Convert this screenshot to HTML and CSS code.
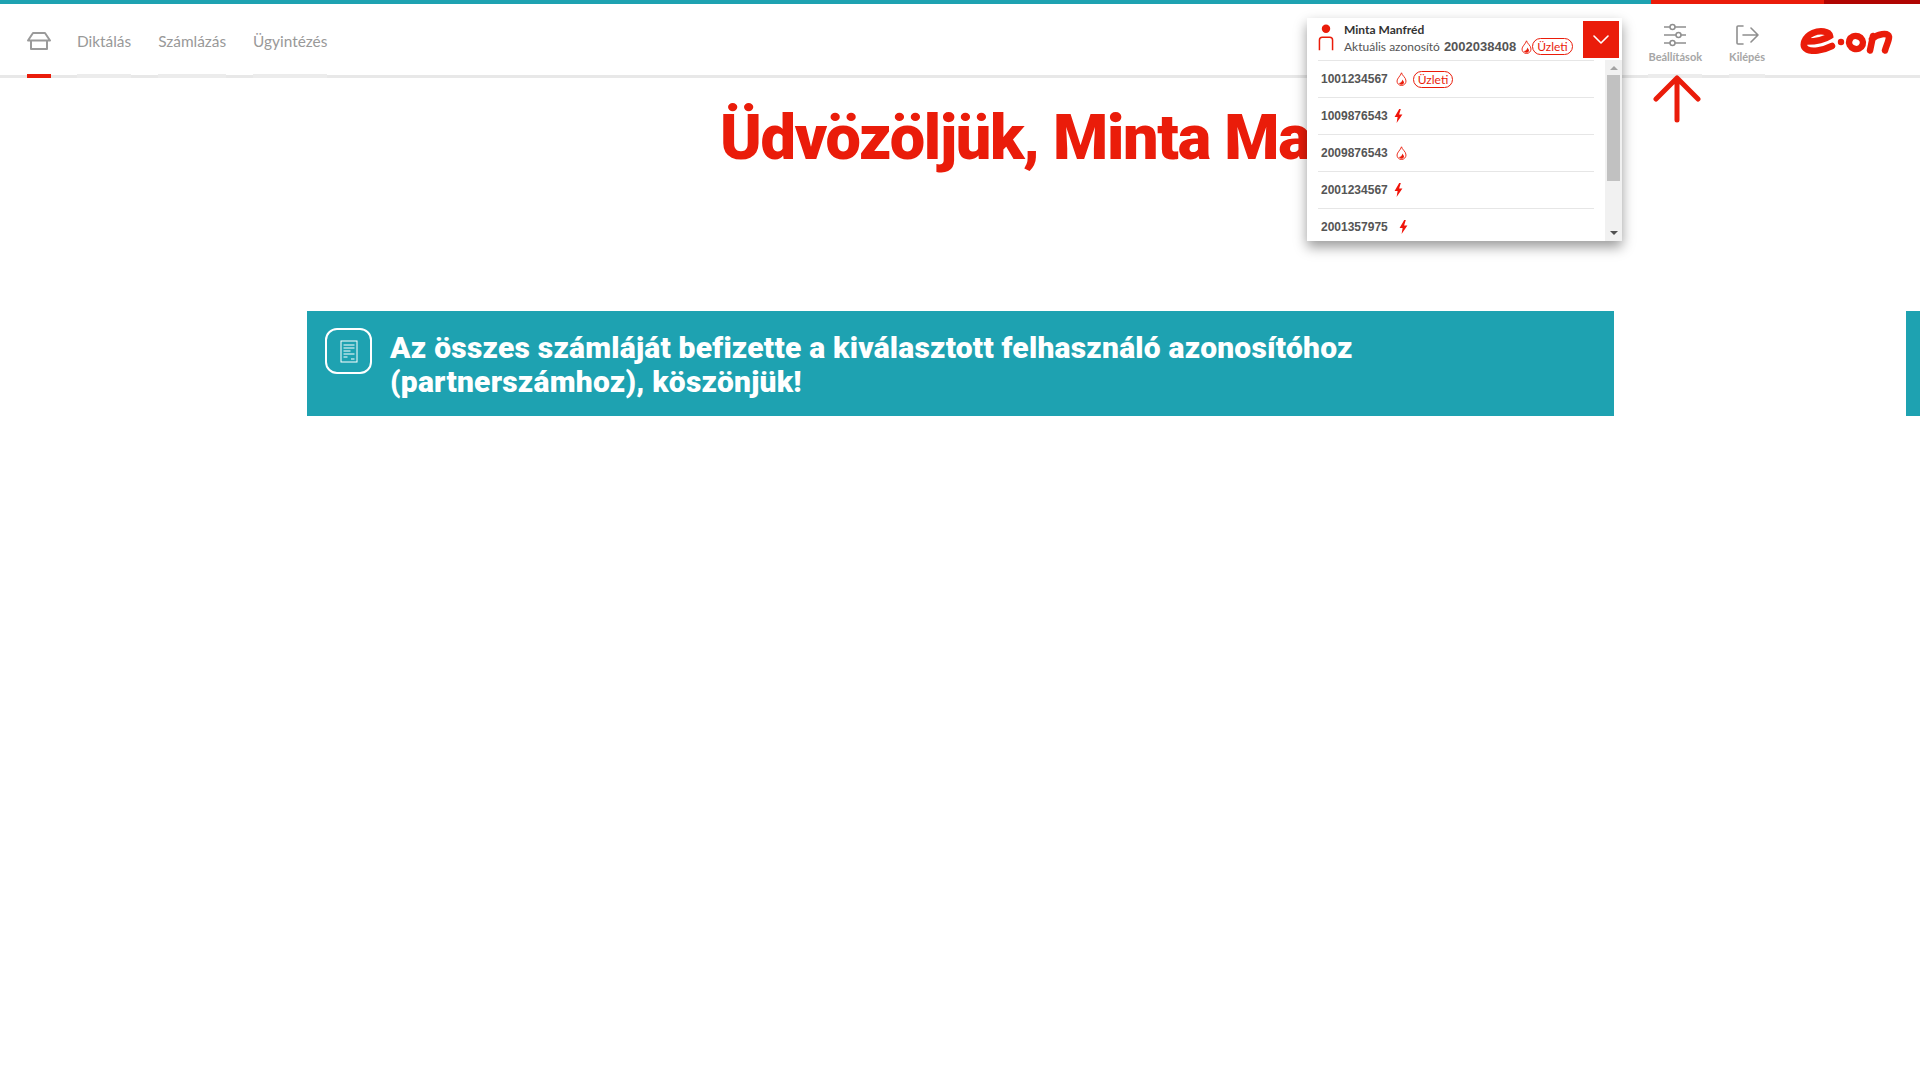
FILE: index.html
```html
<!DOCTYPE html>
<html lang="hu">
<head>
  <meta charset="utf-8">
  <title>E.ON Ügyfélszolgálat</title>
  <link rel="stylesheet" href="styles.css">
</head>
<body>
  <div class="stripe">
    <span class="stripe-teal"></span>
    <span class="stripe-red"></span>
    <span class="stripe-dark"></span>
  </div>

  <header class="header">
    <nav class="nav">
      <a class="nav-item home active">
        <svg width="24" height="18" viewBox="0 0 24 18" fill="none" stroke="#9a9a9a" stroke-width="2" stroke-linejoin="round">
          <path d="M6 1h12l5 7.5H1z"/>
          <path d="M4 8.5V17h16V8.5"/>
        </svg>
      </a>
      <a class="nav-item">Diktálás</a>
      <a class="nav-item">Számlázás</a>
      <a class="nav-item">Ügyintézés</a>
    </nav>

    <div class="actions">
      <a class="action">
        <svg width="24" height="24" viewBox="0 0 24 24" fill="none" stroke="#8f8f8f" stroke-width="1.5">
          <path d="M1 4h6M12 4h11M1 12h12M18 12h5M1 20h6M12 20h11"/>
          <circle cx="9.5" cy="4" r="2.5"/>
          <circle cx="15.5" cy="12" r="2.5"/>
          <circle cx="9.5" cy="20" r="2.5"/>
        </svg>
        <span>Beállítások</span>
      </a>
      <a class="action">
        <svg width="24" height="24" viewBox="0 0 24 24" fill="none" stroke="#8f8f8f" stroke-width="1.6" stroke-linecap="round" stroke-linejoin="round">
          <path d="M8 3H3a1 1 0 0 0-1 1v16a1 1 0 0 0 1 1h5"/>
          <path d="M8 12h15M16 5l7 7-7 7"/>
        </svg>
        <span>Kilépés</span>
      </a>
      <svg class="logo" width="94" height="26" viewBox="0 0 94 26" fill="none" stroke="#ea1c0a" stroke-width="6.500" stroke-linecap="round">
        <path d="M8 13.500C15 13.500 25 12 31 8C30 3 21 2 14 5C5 9 2 18 8 21.500C13 24 23 23 33 18"/>
        <circle cx="42" cy="14" r="3.200" fill="#ea1c0a" stroke="none"/>
        <ellipse cx="57" cy="14.500" rx="7" ry="6.500" transform="rotate(20 57 14.500)"/>
        <path d="M71 22.500L74 8M73 11C78 6 89 4 90 9C90 13 87 18 86 22.500"/>
      </svg>
    </div>

    <div class="account">
      <div class="account-head">
        <svg class="person" width="18" height="30" viewBox="0 0 18 32" fill="none" stroke="#ea1c0a" stroke-width="1.6">
          <circle cx="9" cy="5" r="4.500" fill="#ea1c0a" stroke="none"/>
          <path d="M2 28V17a3 3 0 0 1 3-3h8a3 3 0 0 1 3 3v11"/>
        </svg>
        <div class="account-info">
          <div class="account-name">Minta Manfréd</div>
          <div class="account-line">
            <span class="account-label">Aktuális azonosító</span>
            <span class="account-id">2002038408</span>
            <svg width="11" height="14" viewBox="0 0 11 14"><use href="#flame"/></svg>
            <span class="badge">Üzleti</span>
          </div>
        </div>
        <button class="account-toggle">
          <svg width="16" height="9" viewBox="0 0 16 9" fill="none" stroke="#fff" stroke-width="1.600" stroke-linecap="round" stroke-linejoin="round">
            <path d="M1 1l7 7 7-7"/>
          </svg>
        </button>
      </div>

      <div class="account-body">
        <ul class="account-list">
          <li class="account-row">
            <span class="row-id">1001234567</span>
            <svg class="flame" width="11" height="14" viewBox="0 0 11 14"><use href="#flame"/></svg>
            <span class="badge">Üzleti</span>
          </li>
          <li class="account-row">
            <span class="row-id">1009876543</span>
            <svg width="9" height="14" viewBox="0 0 9 14"><use href="#bolt"/></svg>
          </li>
          <li class="account-row">
            <span class="row-id">2009876543</span>
            <svg class="flame" width="11" height="14" viewBox="0 0 11 14"><use href="#flame"/></svg>
          </li>
          <li class="account-row">
            <span class="row-id">2001234567</span>
            <svg width="9" height="14" viewBox="0 0 9 14"><use href="#bolt"/></svg>
          </li>
          <li class="account-row gap-wider">
            <span class="row-id">2001357975</span>
            <svg width="9" height="14" viewBox="0 0 9 14"><use href="#bolt"/></svg>
          </li>
        </ul>
        <div class="scrollbar">
          <span class="scroll-up"></span>
          <span class="scroll-thumb"></span>
          <span class="scroll-down"></span>
        </div>
      </div>
    </div>

    <svg class="arrow" width="48" height="48" viewBox="0 0 48 48" fill="none" stroke="#ea1c0a" stroke-width="5" stroke-linecap="round" stroke-linejoin="round">
      <path d="M24 3v42M3 24L24 3l21 21"/>
    </svg>
  </header>

  <main class="main">
    <h1 class="title">Üdvözöljük, Minta Manfréd!</h1>

    <div class="slider">
      <div class="slide">
        <div class="slide-icon">
          <svg width="18" height="23" viewBox="0 0 18 23" fill="none" stroke="#fff">
            <rect x="1" y="1" width="16" height="21"/>
            <path d="M3.500 5h11M3.500 8h11M3.500 11h7M3.500 14h11M3.500 17h4M11 19h3.500"/>
          </svg>
        </div>
        <p class="slide-text">Az összes számláját befizette a kiválasztott felhasználó azonosítóhoz (partnerszámhoz), köszönjük!</p>
      </div>
      <div class="slide-next"></div>
    </div>
  </main>

  <svg class="defs" width="0" height="0">
    <symbol id="flame" viewBox="0 0 11 14">
      <path d="M5.500 .8C6 3.500 10 5.500 10 9a4.500 4.500 0 0 1-9 0C1 6.500 4.500 4 5.500 .8z" fill="none" stroke="#ea1c0a" stroke-width=".9"/>
      <path d="M6.500 7.500C7 9 8.200 9.500 8 10.800a2.600 2.600 0 0 1-5 .3C4.500 11 6 10 6.500 7.500z" fill="#ea1c0a"/>
    </symbol>
    <symbol id="bolt" viewBox="0 0 9 14">
      <path d="M5.200 0L.6 8h3L2.600 14 8.400 5.600h-3.300L6.800 0z" fill="#f0140a"/>
    </symbol>
  </svg>
</body>
</html>
```

FILE: styles.css
```css
* {
  margin: 0;
  padding: 0;
  box-sizing: border-box;
}

html, body {
  height: 100%;
  overflow: hidden;
}

body {
  background: white;
  font-family: Lato, 'Open Sans', sans-serif;
  color: #333;
}

.stripe {
  display: flex;
  height: 4px;
}

.stripe-teal {
  width: 1651px;
  background: #1ea2b1;
}

.stripe-red {
  width: 173px;
  background: #ea1c0a;
}

.stripe-dark {
  flex: 1;
  background: #b00402;
}

.header {
  position: relative;
  display: flex;
  justify-content: space-between;
  height: 74px;
  padding: 0 27px 0 27px;
  border-bottom: 3px solid #e8e8e8;
}

.nav {
  display: flex;
  gap: 27px;
}

.nav-item {
  display: flex;
  align-items: center;
  height: 74px;
  padding-top: 3px;
  border-bottom: 4px solid #ececec;
  font-size: 15.400px;
  color: #999;
}

.nav-item.active {
  border-bottom: 4px solid #ea1c0a;
}

.home {
  margin-right: -1px;
}

.actions {
  display: flex;
  align-items: flex-start;
}

.action {
  display: flex;
  flex-direction: column;
  align-items: center;
  gap: 3px;
  height: 74px;
  padding: 19px 0 0;
  border-bottom: 4px solid #ececec;
  margin-right: 27px;
  font-size: 11px;
  font-weight: 700;
  color: #a6a6a6;
}

.logo {
  margin: 24px 0 0 7px;
}

.account {
  position: absolute;
  top: 14px;
  left: 1307px;
  width: 315px;
  height: 223px;
  background: white;
  box-shadow: 0 6px 12px rgba(0,0,0,0.4);
  overflow: hidden;
}

.account-head {
  display: flex;
  align-items: flex-start;
  height: 42px;
  padding: 3px 3px 0 10px;
}

.person {
  margin-top: 3px;
  margin-right: 9px;
}

.account-info {
  flex: 1;
  font-size: 12px;
}

.account-name {
  margin-top: 1px;
  margin-bottom: 1px;
  line-height: 15px;
  font-weight: 700;
  color: #333;
}

.account-line {
  display: flex;
  align-items: center;
  height: 17px;
  color: #555;
}

.account-label {
  margin-right: 4px;
}

.account-id {
  margin-right: 5px;
  font-family: 'Liberation Sans', sans-serif;
  font-size: 13px;
  font-weight: 700;
  color: #555;
}

.badge {
  display: inline-block;
  height: 17px;
  padding: 0 4px;
  border: 1px solid #ea1c0a;
  border-radius: 9px;
  line-height: 15px;
  font-size: 12px;
  color: #ea1c0a;
}

.account-toggle {
  display: flex;
  align-items: center;
  justify-content: center;
  width: 36px;
  height: 37px;
  border: none;
  background: #ea1c0a;
}

.account-body {
  display: flex;
  height: 181px;
}

.account-list {
  flex: 1;
  list-style: none;
  padding: 0 11px 0 11px;
}

.account-row {
  display: flex;
  align-items: center;
  gap: 6px;
  height: 37px;
  padding-left: 3px;
  border-top: 1px solid #e6e6e6;
}

.account-row .flame {
  margin-left: 2px;
}

.gap-wider {
  gap: 11px;
}

.row-id {
  font-family: 'Liberation Sans', sans-serif;
  font-size: 12px;
  font-weight: 700;
  color: #555;
}

.scrollbar {
  display: flex;
  flex-direction: column;
  align-items: center;
  width: 17px;
  background: #f1f1f1;
}

.scroll-up {
  margin: 6px 0 5px;
  border: 4px solid transparent;
  border-top: 0;
  border-bottom: 4px solid #a3a3a3;
}

.scroll-thumb {
  width: 13px;
  height: 106px;
  background: #c1c1c1;
}

.scroll-down {
  margin-top: auto;
  margin-bottom: 6px;
  border: 4px solid transparent;
  border-bottom: 0;
  border-top: 4px solid #505050;
}

.arrow {
  position: absolute;
  top: 71px;
  left: 1653px;
}

.main {
  padding-top: 16px;
}

.title {
  padding-left: 720px;
  font-family: Roboto, sans-serif;
  font-size: 63px;
  font-weight: 900;
  line-height: 88px;
  letter-spacing: -1.300px;
  white-space: nowrap;
  color: #ea1c0a;
}

.slider {
  display: flex;
  gap: 292px;
  margin-top: 129px;
  padding-left: 307px;
}

.slide {
  display: flex;
  flex: none;
  align-items: flex-start;
  width: 1307px;
  height: 105px;
  padding: 17px 18px;
  background: #1ea2b1;
}

.slide-next {
  flex: 1;
  background: #1ea2b1;
}

.slide-icon {
  display: flex;
  flex: none;
  align-items: center;
  justify-content: center;
  width: 47px;
  height: 46px;
  margin-right: 18px;
  border: 2px solid white;
  border-radius: 12px;
}

.slide-text {
  width: 1030px;
  margin-top: 3px;
  font-family: Roboto, sans-serif;
  font-size: 30px;
  font-weight: 900;
  line-height: 34px;
  letter-spacing: .22px;
  color: white;
}

.defs {
  position: absolute;
}
```
